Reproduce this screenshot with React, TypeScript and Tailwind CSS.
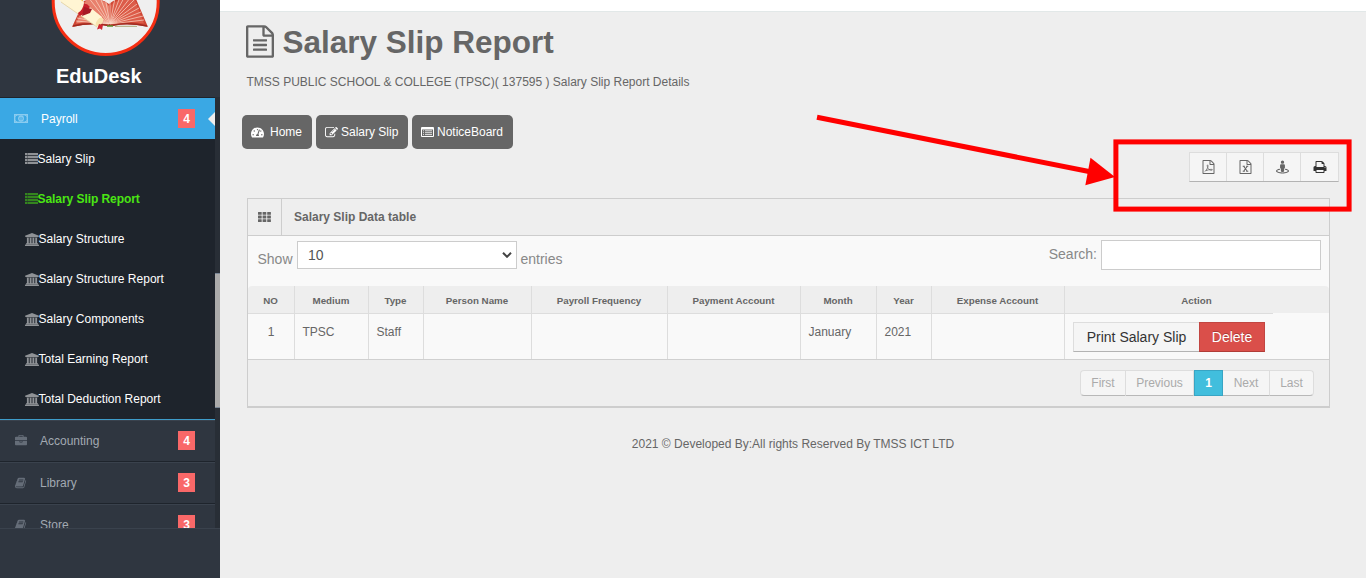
import React from "react";
import { FaTachometerAlt, FaStreetView } from "react-icons/fa";

type IconProps = { className?: string };

const PATHS = {
  fileText:
    "M1596 380q28 28 48 76t20 88v1152q0 40-28 68t-68 28h-1344q-40 0-68-28t-28-68v-1600q0-40 28-68t68-28h896q40 0 88 20t76 48zm-444-244v376h376q-10-29-22-41l-313-313q-12-12-41-22zm384 1528v-1024h-416q-40 0-68-28t-28-68v-416h-768v1536h1280zm-1024-864q0-14 9-23t23-9h704q14 0 23 9t9 23v64q0 14-9 23t-23 9h-704q-14 0-23-9t-9-23v-64zm736 224q14 0 23 9t9 23v64q0 14-9 23t-23 9h-704q-14 0-23-9t-9-23v-64q0-14 9-23t23-9h704zm0 256q14 0 23 9t9 23v64q0 14-9 23t-23 9h-704q-14 0-23-9t-9-23v-64q0-14 9-23t23-9h704z",
  file: "M1596 380q28 28 48 76t20 88v1152q0 40-28 68t-68 28h-1344q-40 0-68-28t-28-68v-1600q0-40 28-68t68-28h896q40 0 88 20t76 48zm-444-244v376h376q-10-29-22-41l-313-313q-12-12-41-22zm384 1528v-1024h-416q-40 0-68-28t-28-68v-416h-768v1536h1280z",
  bank: "M832 0l960 384v128h-128q0 26-20.500 45t-48.500 19h-1526q-28 0-48.500-19t-20.500-45h-128v-128zm-704 640h256v768h128v-768h256v768h128v-768h256v768h128v-768h256v768h59q28 0 48.500 19t20.500 45v64h-1664v-64q0-26 20.500-45t48.500-19h59v-768zm1595 960q28 0 48.500 19t20.500 45v128h-1920v-128q0-26 20.500-45t48.500-19h1782z",
  book: "M1639 478q40 57 18 129l-275 906q-19 64-76.500 107.500t-122.500 43.500h-923q-77 0-148.500-53.500t-99.500-131.500q-24-67-2-127 0-4 3-27t4-37q1-8-3-21.500t-3-19.500q2-11 8-21t16.500-23.500 16.500-23.500q23-38 45-91.500t30-91.500q3-10 .5-30t-.5-28q3-11 17-28t17-23q21-36 42-92t25-90q1-9-2.500-32t.5-28q4-13 22-30.500t22-22.500q19-26 42.500-84.500t27.500-96.500q1-8-3-25.500t-2-26.500q2-8 9-18t18-23 17-21q8-12 16.500-30.500t15-35 16-36 19.500-32 26.500-23.500 36-11.500 47.500 5.500l-1 3q38-9 51-9h761q74 0 114 56t18 130l-274 906q-36 119-71.500 153.500t-128.500 34.500h-869q-27 0-38 15-11 16-1 43 24 70 144 70h923q29 0 56-15.500t35-41.500l300-987q7-22 5-57 38 15 59 43zm-1064 2q-4 13 2 22.500t20 9.500h608q13 0 25.500-9.500t16.500-22.500l21-64q4-13-2-22.500t-20-9.500h-608q-13 0-25.500 9.500t-16.500 22.500zm-83 256q-4 13 2 22.500t20 9.500h608q13 0 25.500-9.500t16.500-22.500l21-64q4-13-2-22.500t-20-9.500h-608q-13 0-25.500 9.500t-16.500 22.500z",
  briefcase:
    "M640 256h512v-128h-512v128zm1152 640v480q0 66-47 113t-113 47h-1472q-66 0-113-47t-47-113v-480h672v160q0 26 19 45t45 19h320q26 0 45-19t19-45v-160h672zm-768 0v128h-256v-128h256zm768-480v384h-1792v-384q0-66 47-113t113-47h352v-160q0-40 28-68t68-28h576q40 0 68 28t28 68v160h352q66 0 113 47t47 113z",
  edit: "M888 1184l116-116-152-152-116 116v56h96v96h56zm440-720q-16-16-33 1l-350 350q-17 17-1 33t33-1l350-350q17-17 1-33zm80 594v190q0 119-84.500 203.500t-203.500 84.500h-832q-119 0-203.500-84.500t-84.500-203.500v-832q0-119 84.500-203.500t203.500-84.500h832q63 0 117 25 15 7 18 23 3 17-9 29l-49 49q-14 14-32 8-23-6-45-6h-832q-66 0-113 47t-47 113v832q0 66 47 113t113 47h832q66 0 113-47t47-113v-126q0-13 9-22l64-64q15-15 35-7t20 29zm-96-738l288 288-672 672h-288v-288zm444 132l-92 92-288-288 92-92q28-28 68-28t68 28l152 152q28 28 28 68t-28 68z",
  print:
    "M448 1536h896v-256h-896v256zm0-640h896v-384h-160q-40 0-68-28t-28-68v-160h-640v640zm1152 64q0-26-19-45t-45-19-45 19-19 45 19 45 45 19 45-19 19-45zm128 0v416q0 13-9.500 22.500t-22.500 9.500h-224v160q0 40-28 68t-68 28h-960q-40 0-68-28t-28-68v-160h-224q-13 0-22.500-9.500t-9.500-22.500v-416q0-79 56.500-135.500t135.500-56.500h64v-544q0-40 28-68t68-28h672q40 0 88 20t76 48l152 152q28 28 48 76t20 88v256h64q79 0 135.500 56.500t56.500 135.500z",
};

function Glyph({ name, className, box = "0 0 1792 1792" }: IconProps & { name: keyof typeof PATHS; box?: string }) {
  return (
    <svg viewBox={box} className={className} fill="currentColor">
      <path d={PATHS[name]} />
    </svg>
  );
}

function ListIcon({ className }: IconProps) {
  return (
    <svg viewBox="0 0 13 11" className={className} fill="currentColor">
      {[0, 3, 6, 9].map((y) => (
        <g key={y}>
          <rect x="0" y={y} width="2.500" height="2" />
          <rect x="3" y={y} width="10" height="2" />
        </g>
      ))}
      <rect x="0" y="0" width="13" height="11" opacity="0.25" />
    </svg>
  );
}

function MoneyIcon({ className }: IconProps) {
  return (
    <svg viewBox="0 0 14 9" className={className} fill="none" stroke="currentColor">
      <rect x="0.7" y="0.7" width="12.600" height="7.600" strokeWidth="1.400" />
      <ellipse cx="7" cy="4.500" rx="2.300" ry="2.500" strokeWidth="1.300" />
      <path d="M7 3v3M1 2.500l2-1.500M13 2.500l-2-1.500M1 6.500l2 1.500M13 6.500l-2 1.500" />
    </svg>
  );
}

function GridIcon({ className }: IconProps) {
  return (
    <svg viewBox="0 0 13 10" className={className} fill="currentColor">
      {[0, 3.6, 7.2].map((y) =>
        [0, 4.6, 9.2].map((x) => <rect key={`${x}-${y}`} x={x} y={y} width="3.700" height="2.800" rx="0.3" />)
      )}
    </svg>
  );
}

function BoardIcon({ className }: IconProps) {
  return (
    <svg viewBox="0 0 13 10" className={className}>
      <path
        fill="currentColor"
        fillRule="evenodd"
        d="M1 0h11a1 1 0 0 1 1 1v8a1 1 0 0 1-1 1H1a1 1 0 0 1-1-1V1a1 1 0 0 1 1-1zm0 2.500V9h11V2.500z"
      />
      <path stroke="currentColor" strokeWidth="0.8" d="M2 3.800h1M4 3.800h7M2 5.700h1M4 5.700h7M2 7.600h1M4 7.600h7" />
    </svg>
  );
}

function PdfIcon({ className }: IconProps) {
  return (
    <svg viewBox="0 0 1792 1792" className={className} fill="currentColor">
      <path d={PATHS.file} />
      <path
        fill="none"
        stroke="currentColor"
        strokeWidth="105"
        d="M400 1490c150-60 300-300 400-560 60-160 40-300-20-300s-60 130 10 330c90 230 240 330 460 350 100 0 160-30 140-80s-330-60-800 130"
      />
    </svg>
  );
}

function ExcelIcon({ className }: IconProps) {
  return (
    <svg viewBox="0 0 1792 1792" className={className} fill="currentColor">
      <path d={PATHS.file} />
      <path
        fill="none"
        stroke="currentColor"
        strokeWidth="140"
        d="M660 800l460 640M1120 800l-460 640M540 790h270M980 790h270M540 1440h270M980 1440h270"
      />
    </svg>
  );
}

function Logo() {
  return (
    <svg viewBox="50 0 112 58" className="ml-[50px] block h-[58px] w-[112px]">
      <defs>
        <clipPath id="badge">
          <circle cx="105.700" cy="2" r="51.500" />
        </clipPath>
      </defs>
      <circle cx="105.700" cy="2" r="52.500" fill="#efefef" stroke="#f52d12" strokeWidth="3" />
      <g clipPath="url(#badge)">
        <path d="M72 27L84 1Q98-4 109 4q12-10 27-5l12 28q-22-5-36-1h-5q-15-4-35 1z" fill="#cf4634" />
        <path d="M76 23.500L87-2q15-1 22 8l0.500 18.500q-14-5-33.500-1z" fill="#e8806c" />
        <path d="M144 23.500L134-2q-15-1-24 8v18.500q14-5 34-1z" fill="#dc5c49" />
        <path
          d="M109 24L88-3M109.500 24L94-3M110 24L100-3M110 24L105-3M110 24V-2M110 24l5-26M110 24l10-27M110 24l15-28M110 24l20-26M110 24l24-24M110 24l27-20M110 24l29-16M110 24l31-12M110 24l33-8M110 24l34-4M109 24L84 3M109 24L81 9M109 24L79 14M109 24L77 18M109 24L76 21"
          stroke="#fbd9c8"
          strokeWidth="0.7"
          fill="none"
        />
        <path d="M73 26q18-4 34-0.700h6q15-3.300 34 0.700" stroke="#a02a20" strokeWidth="1.400" fill="none" />
        <path d="M107 26h6" stroke="#5f8a2a" strokeWidth="1.600" />
        <path d="M115 26.300h22" stroke="#8c8a45" strokeWidth="0.7" />
        <path d="M75-2h9l-2 5-6-3z" fill="#f1bd46" />
        <path d="M56-4h20l26 21q0 7-5 10L61 2z" fill="#fff5d3" />
        <path d="M61 2l36 25" stroke="#e0cfa0" strokeWidth="0.8" />
        <ellipse cx="99.500" cy="22" rx="2.800" ry="5" transform="rotate(35 99.500 22)" fill="#f6e3b0" />
        <path d="M84 3q4 1 6 4-4 6-10 9-2-1-2-3 5-3 6-10z" fill="#c81f29" />
        <path d="M84 7l8 2-2 4-8 3z" fill="#a71924" />
        <path d="M99 24l4 1-1 5-2-1.500-3 1z" fill="#cf2630" />
      </g>
    </svg>
  );
}

const subItems: { label: string; icon: "list" | "bank"; active?: boolean }[] = [
  { label: "Salary Slip", icon: "list" },
  { label: "Salary Slip Report", icon: "list", active: true },
  { label: "Salary Structure", icon: "bank" },
  { label: "Salary Structure Report", icon: "bank" },
  { label: "Salary Components", icon: "bank" },
  { label: "Total Earning Report", icon: "bank" },
  { label: "Total Deduction Report", icon: "bank" },
];

const sections: { label: string; icon: "briefcase" | "book"; count: number }[] = [
  { label: "Accounting", icon: "briefcase", count: 4 },
  { label: "Library", icon: "book", count: 3 },
  { label: "Store", icon: "book", count: 3 },
];

function Count({ value }: { value: number }) {
  return (
    <span className="mr-5 flex h-[19px] w-[17px] items-center justify-center bg-[#f96868] text-xs font-bold text-white">
      {value}
    </span>
  );
}

function Sidebar() {
  return (
    <aside className="flex h-full w-[220px] shrink-0 flex-col bg-[#2f3640]">
      <div className="h-[97px] shrink-0">
        <Logo />
        <div className="ml-[56px] mt-[6px] text-[20px] leading-6 font-bold text-white">EduDesk</div>
      </div>
      <div className="flex h-[431px] overflow-hidden">
        <nav className="w-[215px] shrink-0 border-t border-[#1e242c]">
          <div className="relative flex h-[41px] items-center bg-[#3aa8e4] text-white">
            <MoneyIcon className="ml-[14px] h-[9px] w-[14px] text-[#8accf0]" />
            <span className="ml-[13px] flex-1 text-xs">Payroll</span>
            <Count value={4} />
            <span className="absolute top-[14px] right-0 h-0 w-0 border-y-[7px] border-r-[7px] border-y-transparent border-r-[#eeeeee]" />
          </div>
          <ul className="bg-[#1e242c]">
            {subItems.map((item) => (
              <li
                key={item.label}
                className={
                  item.active
                    ? "flex h-10 items-center pl-[24.500px] text-xs font-bold tracking-[-0.06px] text-[#4ae613]"
                    : "flex h-10 items-center pl-[24.500px] text-xs text-white"
                }
              >
                {item.icon === "list" ? (
                  <ListIcon className="mb-[2px] h-[11px] w-[13px] opacity-50" />
                ) : (
                  <Glyph name="bank" box="-128 0 1920 1792" className="h-[13px] w-[14px] opacity-50" />
                )}
                <span>{item.label}</span>
              </li>
            ))}
          </ul>
          <div className="border-t border-[#3e9cc9]">
            {sections.map((s) => (
              <div
                key={s.label}
                className="flex h-[42px] items-center border-t border-b border-t-[#3a424d] border-b-[#1e242c] text-xs text-[#a2a9b2]"
              >
                <Glyph name={s.icon} className="ml-[15px] h-[12px] w-[12px] text-[#656d78]" />
                <span className="ml-[13px] flex-1">{s.label}</span>
                <div className="mb-px">
                  <Count value={s.count} />
                </div>
              </div>
            ))}
          </div>
        </nav>
        <div className="w-[5px] bg-[#282e36] pt-[176px]">
          <div className="relative h-[135px] w-[6px] border border-l-0 border-[#788595] bg-[#aaaaaa]" />
        </div>
      </div>
      <div className="flex-1 border-t border-[#3a424d]" />
    </aside>
  );
}

const headers = ["NO", "Medium", "Type", "Person Name", "Payroll Frequency", "Payment Account", "Month", "Year", "Expense Account", "Action"];
const row = ["1", "TPSC", "Staff", "", "", "", "January", "2021", ""];

function Table() {
  return (
    <div className="w-[1081px]">
      <div className="grid h-[27px] grid-cols-[47px_74px_55px_108px_136px_133px_76px_55px_133px_264px] overflow-hidden rounded-t bg-[#eeeeee] text-[9.750px] font-bold text-[#666666]">
        {headers.map((h) => (
          <div key={h} className="flex items-center justify-center border-r border-[#dddddd] pt-[3px] pr-px last:border-r-0">
            {h}
          </div>
        ))}
      </div>
      <div className="h-px w-[1025px] bg-[#dddddd]" />
      <div className="grid h-[46px] grid-cols-[47px_74px_55px_108px_136px_133px_76px_55px_133px_264px] border-b border-[#d0d0d0] text-xs text-[#666666]">
        {row.map((c, i) => (
          <div
            key={i}
            className={
              i === 0
                ? "border-r border-[#dddddd] pt-[9px] text-center leading-[18px]"
                : "border-r border-[#dddddd] pt-[9px] pl-[7.500px] leading-[18px]"
            }
          >
            {c}
          </div>
        ))}
        <div className="flex pt-2 pl-2 text-sm">
          <button className="h-[30px] w-[126px] border border-r-0 border-[#dddddd] border-b-[#b3b3b3] bg-[#f5f5f5] text-[#333333]">
            Print Salary Slip
          </button>
          <button className="h-[30px] w-[66px] border border-[#c24642] border-b-[#b03c37] bg-[#da4f4a] text-white [text-shadow:0_-1px_0_rgba(0,0,0,0.25)]">
            Delete
          </button>
        </div>
      </div>
    </div>
  );
}

function Pager() {
  return (
    <div className="flex h-[46px] justify-end pt-[10px] pr-[15px] text-xs text-[#aaaaaa]">
      <div className="flex h-[26px] leading-6">
        <span className="w-[46px] rounded-l border border-[#dddddd] border-b-[#b8b8b8] bg-[#f5f5f5] text-center">First</span>
        <span className="w-[68px] border border-l-0 border-[#dddddd] border-b-[#b8b8b8] bg-[#f5f5f5] text-center">Previous</span>
        <span className="w-[29px] border border-[#38a5c4] bg-[#41bedd] text-center font-bold text-white">1</span>
        <span className="w-[47px] border border-l-0 border-[#dddddd] border-b-[#b8b8b8] bg-[#f5f5f5] text-center">Next</span>
        <span className="w-[44px] rounded-r border border-l-0 border-[#dddddd] border-b-[#b8b8b8] bg-[#f5f5f5] text-center">Last</span>
      </div>
    </div>
  );
}

function Content() {
  return (
    <main className="flex flex-1 flex-col text-[#666666]">
      <div className="h-[12px] border-b border-[#e2e8e8] bg-white" />
      <header className="h-[103px] pl-[26px]">
        <div className="flex h-[60px] items-center">
          <Glyph name="fileText" box="128 0 1536 1792" className="mb-px h-[33px] w-[28px]" />
          <h1 className="mt-px ml-[8.500px] text-[31.500px] font-bold">Salary Slip Report</h1>
        </div>
        <p className="pl-[0.500px] text-xs leading-5">TMSS PUBLIC SCHOOL &amp; COLLEGE (TPSC)( 137595 ) Salary Slip Report Details</p>
      </header>
      <div className="flex h-[34px] gap-1 pl-[22px] text-xs text-white">
        <button className="flex w-[70px] items-center rounded-[5px] bg-[#666666] pl-[9px]">
          <FaTachometerAlt className="mr-[6px] h-[13px] w-[13px]" />
          Home
        </button>
        <button className="flex w-[92px] items-center rounded-[5px] bg-[#666666] pl-[9px]">
          <Glyph name="edit" className="mr-[3px] h-[13px] w-[13px]" />
          Salary Slip
        </button>
        <button className="flex w-[101px] items-center rounded-[5px] bg-[#666666] pl-[9px]">
          <BoardIcon className="mr-[3px] h-[10px] w-[13px]" />
          NoticeBoard
        </button>
      </div>
      <div className="mt-[3px] mr-[27px] flex h-[30px] w-[150px] self-end border border-[#dddddd] border-b-[#b3b3b3] bg-[#f5f5f5]">
        <button className="flex w-[37px] items-center justify-center border-r border-[#dddddd] pl-px">
          <PdfIcon className="h-[14px] w-[15px]" />
        </button>
        <button className="flex w-[37px] items-center justify-center border-r border-[#dddddd] pl-px">
          <ExcelIcon className="h-[14px] w-[15px]" />
        </button>
        <button className="flex w-[37px] items-center justify-center border-r border-[#dddddd]">
          <FaStreetView className="h-[14px] w-[13px]" />
        </button>
        <button className="flex w-[37px] items-center justify-center pl-px text-[#333333]">
          <Glyph name="print" className="h-[14px] w-[14px]" />
        </button>
      </div>
      <section className="mt-4 ml-[27px] h-[210px] w-[1083px] border border-b-2 border-[#cdcdcd] bg-[#f9f9f9]">
        <div className="flex h-[37px] items-center border-b border-[#cdcdcd] bg-[#eeeeee] text-xs font-bold">
          <span className="flex h-full w-[34px] items-center justify-center border-r border-[#cdcdcd]">
            <GridIcon className="h-[10px] w-[13px]" />
          </span>
          <h2 className="ml-3">Salary Slip Data table</h2>
        </div>
        <div className="flex h-[50px] items-start pl-[9.500px] pr-2 text-sm text-[#888888]">
          <span className="mt-[13px] w-[39.500px]">Show</span>
          <div className="mt-[5px] flex h-[28px] w-[220px] items-center justify-between border border-[#cccccc] bg-white pr-[4px] pl-[10px] text-[#555555]">
            10
            <svg viewBox="0 0 10 6" className="h-[6px] w-[10px]" fill="none" stroke="#444444" strokeWidth="2">
              <path d="M1 0.800l4 4 4-4" />
            </svg>
          </div>
          <span className="mt-[13px] ml-[3.500px] flex-1">entries</span>
          <span className="mt-2 mr-1">Search:</span>
          <input aria-label="Search" className="mt-1 h-[30px] w-[220px] border border-[#cccccc] bg-white" />
        </div>
        <Table />
        <div className="bg-[#eeeeee]">
          <Pager />
        </div>
      </section>
      <footer className="mt-[26px] text-center text-xs leading-5">
        2021 © Developed By:All rights Reserved By TMSS ICT LTD
      </footer>
    </main>
  );
}

function Callout() {
  return (
    <svg viewBox="0 0 1366 578" className="pointer-events-none absolute inset-0 h-[578px] w-[1366px]">
      <path d="M817 117.300L1089 171.500" stroke="#ff0000" strokeWidth="5" />
      <path d="M1115 177L1090.500 157.700L1085.300 185.200z" fill="#ff0000" />
      <rect x="1115.900" y="141.900" width="233.200" height="67.200" fill="none" stroke="#ff0000" strokeWidth="5" />
    </svg>
  );
}

export default function App() {
  return (
    <div className="relative flex h-[578px] w-[1366px] overflow-hidden bg-[#eeeeee] font-['Liberation_Sans',Arial,sans-serif]">
      <Sidebar />
      <Content />
      <Callout />
    </div>
  );
}
